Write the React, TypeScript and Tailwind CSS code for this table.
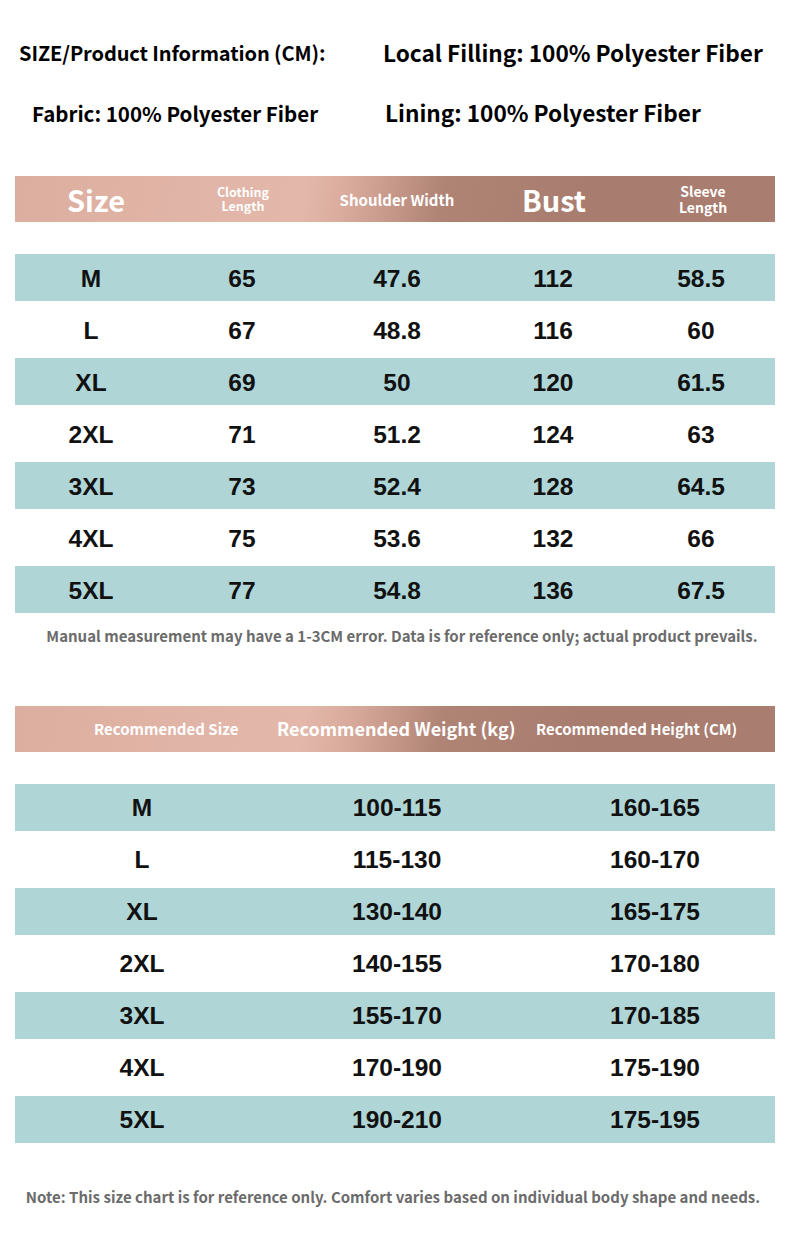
import React from "react";

const t1 = [
  ["M", "65", "47.6", "112", "58.5"],
  ["L", "67", "48.8", "116", "60"],
  ["XL", "69", "50", "120", "61.5"],
  ["2XL", "71", "51.2", "124", "63"],
  ["3XL", "73", "52.4", "128", "64.5"],
  ["4XL", "75", "53.6", "132", "66"],
  ["5XL", "77", "54.8", "136", "67.5"],
];

const t2 = [
  ["M", "100-115", "160-165"],
  ["L", "115-130", "160-170"],
  ["XL", "130-140", "165-175"],
  ["2XL", "140-155", "170-180"],
  ["3XL", "155-170", "170-185"],
  ["4XL", "170-190", "175-190"],
  ["5XL", "190-210", "175-195"],
];

const sans = "font-['Noto_Sans_CJK_SC','Noto_Sans',sans-serif]";
const num = "font-['Liberation_Sans',Arial,sans-serif]";
const grad =
  "bg-[linear-gradient(100deg,#dcaea0_0%,#e3b8aa_38%,#d8aa9b_44%,#b08475_56%,#a87c6e_75%,#a97d6f_100%)]";

export default function App() {
  return (
    <div className={`w-[790px] h-[1253px] bg-white ${sans} overflow-hidden`}>
      {/* Info */}
      <div className="pt-[40px]">
        <div className="flex items-center h-[26px] pl-[19px] text-black font-bold">
          <div className="w-[364px] text-[20px] tracking-[-0.1px]">SIZE/Product Information (CM):</div>
          <div className="text-[22.6px]">Local Filling: 100% Polyester Fiber</div>
        </div>
        <div className="flex items-center h-[26px] mt-[34px] pl-[32px] text-black font-bold">
          <div className="w-[353px] text-[20.5px]">Fabric: 100% Polyester Fiber</div>
          <div className="text-[22.6px]">Lining: 100% Polyester Fiber</div>
        </div>
      </div>

      {/* Table 1 header */}
      <div className={`mx-[15px] mt-[50px] h-[46px] ${grad} grid grid-cols-[152px_150px_160px_152px_144px] items-center text-white font-bold`}>
        <div className="text-center text-[29px] leading-none pl-[10px]">Size</div>
        <div className="text-center text-[12.5px] leading-[14px] pl-[2px]">
          Clothing
          <br />
          Length
        </div>
        <div className="text-center text-[15px] leading-none pt-[1px]">Shoulder Width</div>
        <div className="text-center text-[29px] leading-none pl-[2px]">Bust</div>
        <div className="text-center text-[14px] leading-[16px] pl-[4px]">
          Sleeve
          <br />
          Length
        </div>
      </div>

      {/* Table 1 rows */}
      <div className="mx-[15px] mt-[32px] flex flex-col gap-[5px]">
        {t1.map((r, i) => (
          <div
            key={r[0]}
            className={`h-[47px] grid grid-cols-[152px_150px_160px_152px_144px] items-center ${num} font-bold text-[24.5px] text-[#111] ${
              i % 2 === 0 ? "bg-[#afd5d7]" : "bg-white"
            }`}
          >
            {r.map((c, j) => (
              <div key={j} className="text-center pt-[3px]">
                {c}
              </div>
            ))}
          </div>
        ))}
      </div>

      <div className="mt-[12px] text-center text-[15px] font-bold text-[#6b6b6b] pl-[14px]">
        Manual measurement may have a 1-3CM error. Data is for reference only; actual product prevails.
      </div>

      {/* Table 2 header */}
      <div className={`mx-[15px] mt-[58px] h-[46px] ${grad} flex items-center text-white font-bold`}>
        <div className="w-[79px]" />
        <div className="w-[183px] text-[15px] pt-[1px]">Recommended Size</div>
        <div className="w-[259px] text-[18px]">Recommended Weight (kg)</div>
        <div className="text-[15px] pt-[1px]">Recommended Height (CM)</div>
      </div>

      {/* Table 2 rows */}
      <div className="mx-[15px] mt-[32px] flex flex-col gap-[5px]">
        {t2.map((r, i) => (
          <div
            key={r[0]}
            className={`h-[47px] grid grid-cols-[254px_256px_248px] items-center ${num} font-bold text-[24.5px] text-[#111] ${
              i % 2 === 0 ? "bg-[#afd5d7]" : "bg-white"
            }`}
          >
            {r.map((c, j) => (
              <div key={j} className={`text-center pt-[3px] ${j === 2 ? "pl-[12px]" : ""}`}>
                {c}
              </div>
            ))}
          </div>
        ))}
      </div>

      <div className="mt-[43px] text-center text-[15px] font-bold text-[#6b6b6b] pr-[4px]">
        Note: This size chart is for reference only. Comfort varies based on individual body shape and needs.
      </div>
    </div>
  );
}
